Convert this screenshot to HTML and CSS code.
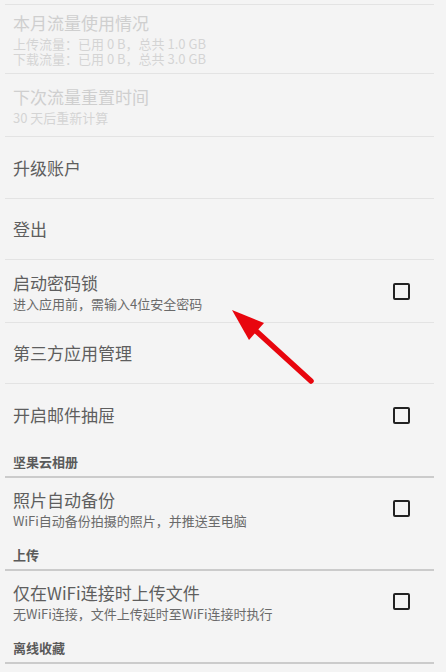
FILE: index.html
```html
<!DOCTYPE html>
<html lang="zh-CN">
<head>
    <meta charset="UTF-8">
    <meta name="viewport" content="width=device-width, initial-scale=1.0">
    <title>设置</title>
    <link rel="stylesheet" href="styles.css">
</head>
<body>
    <div class="list">
        <div class="stub"></div>

        <div class="pref disabled tall">
            <div class="text">
                <div class="title">本月流量使用情况</div>
                <div class="summary">上传流量：已用 0 B，总共 1.0 GB</div>
                <div class="summary next">下载流量：已用 0 B，总共 3.0 GB</div>
            </div>
        </div>

        <div class="pref disabled h62">
            <div class="text">
                <div class="title">下次流量重置时间</div>
                <div class="summary">30 天后重新计算</div>
            </div>
        </div>

        <div class="pref h61">
            <div class="text"><div class="title">升级账户</div></div>
        </div>

        <div class="pref h60">
            <div class="text"><div class="title">登出</div></div>
        </div>

        <div class="pref h62">
            <div class="text">
                <div class="title">启动密码锁</div>
                <div class="summary">进入应用前，需输入4位安全密码</div>
            </div>
            <span class="checkbox"></span>
        </div>

        <div class="pref h60">
            <div class="text"><div class="title">第三方应用管理</div></div>
        </div>

        <div class="pref h62 last">
            <div class="text"><div class="title">开启邮件抽屉</div></div>
            <span class="checkbox"></span>
        </div>

        <div class="category">坚果云相册</div>

        <div class="pref h61 last">
            <div class="text">
                <div class="title">照片自动备份</div>
                <div class="summary">WiFi自动备份拍摄的照片，并推送至电脑</div>
            </div>
            <span class="checkbox"></span>
        </div>

        <div class="category">上传</div>

        <div class="pref h61 last">
            <div class="text">
                <div class="title">仅在WiFi连接时上传文件</div>
                <div class="summary">无WiFi连接，文件上传延时至WiFi连接时执行</div>
            </div>
            <span class="checkbox"></span>
        </div>

        <div class="category">离线收藏</div>
    </div>

    <!-- annotation arrow drawn over the list -->
    <svg class="arrow" width="95" height="85" viewBox="0 0 95 85">
        <line x1="30" y1="25" x2="86" y2="76" stroke="#e8060e" stroke-width="5.5" stroke-linecap="round"/>
        <polygon points="7,5 39,18 24,35" fill="#e8060e"/>
    </svg>
</body>
</html>
```

FILE: styles.css
```css
body {
    margin: 0;
    background-color: #f4f4f4;
    font-family: "Noto Sans CJK SC", "Noto Sans", sans-serif;
    color: #5e5e5e;
    position: relative;
    height: 672px;
    overflow: hidden;
}

.list {
    margin: 0 12px 0 5px;
}

.stub {
    height: 4px;
    border-bottom: 1px solid #e3e3e3;
}

.pref {
    display: flex;
    align-items: center;
    padding: 0 24px 0 8px;
    border-bottom: 1px solid #e3e3e3;
}

.pref.last {
    border-bottom: none;
}

.tall { height: 68px; }
.h62 { height: 62px; }
.h61 { height: 61px; }
.h60 { height: 60px; }

.text {
    flex: 1;
}

.title {
    font-size: 17px;
    line-height: 22px;
}

.summary {
    margin-top: 2px;
    font-size: 13px;
    line-height: 15px;
    color: #6a6a6a;
}

.summary.next {
    margin-top: 0;
}

.disabled .title {
    color: #cfcfcf;
}

.disabled .summary {
    color: #d4d4d4;
}

.checkbox {
    width: 13px;
    height: 13px;
    border: 2px solid #222;
    border-radius: 2px;
}

.category {
    padding: 7px 8px 5px;
    font-size: 13px;
    line-height: 18px;
    font-weight: bold;
    color: #5a5a5a;
    border-bottom: 2px solid #cbcbcb;
}

.arrow {
    position: absolute;
    left: 225px;
    top: 305px;
}
```
